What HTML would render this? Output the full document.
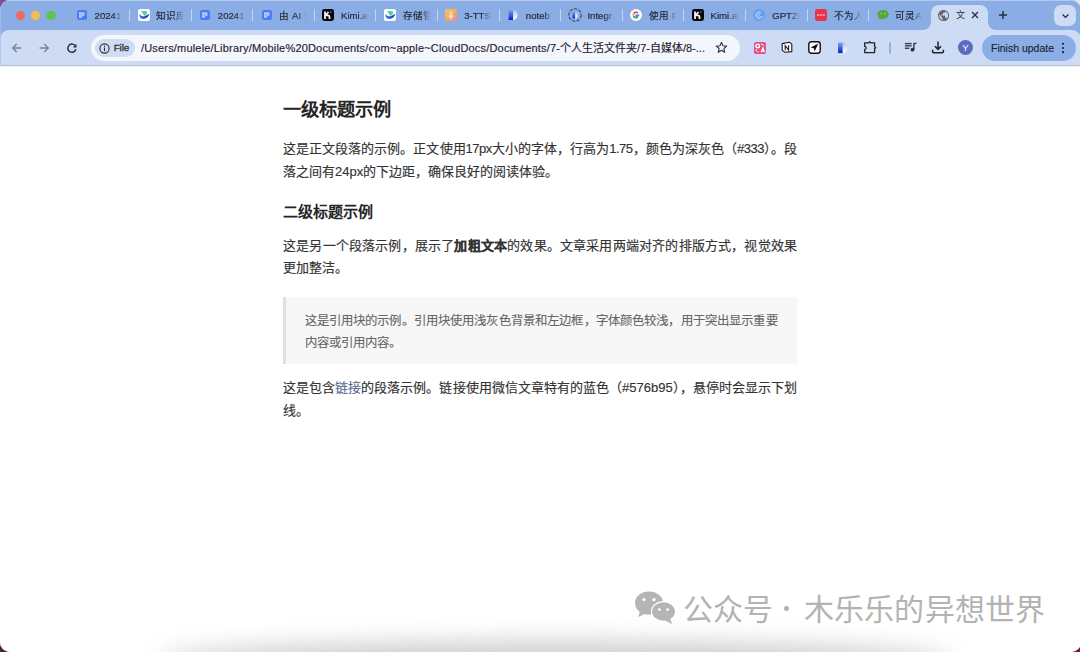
<!DOCTYPE html>
<html lang="zh-CN"><head><meta charset="utf-8">
<style>
*{box-sizing:border-box;margin:0;padding:0}
html,body{width:1080px;height:652px;overflow:hidden}
body{position:relative;background:#b4c8ee;font-family:"Liberation Sans",sans-serif}
.abs{position:absolute}
svg{display:block}
#corner-tl{left:0;top:0;width:14px;height:14px;background:#7a5096}
#corner-tr{right:0;top:0;width:14px;height:14px;background:#e8e4dc}
#corner-bl{left:0;bottom:0;width:14px;height:14px;background:#4a2432}
#corner-br{right:0;bottom:0;width:14px;height:14px;background:#7a1c24}
#win{left:0;top:0;width:1081px;height:652px;border-radius:10px;overflow:hidden;background:#fff;}
#tabstrip{left:0;top:0;width:1086px;height:45px;background:#8badE6}
.tl{width:9.6px;height:9.6px;border-radius:50%;top:10.6px}
#toolbar{left:0;top:30px;width:1081px;height:35px;background:#cddbf4;border-radius:9px 9px 0 0}
#tbborder{left:0;top:65px;width:1086px;height:1px;background:#b9c4d8}
#tbborder2{left:0;top:66px;width:1086px;height:1px;background:#eceff4}
#page{left:0;top:67px;width:1086px;height:600px;background:#fff}
.ti{top:9px;width:12px;height:12px}
.tt{-webkit-text-stroke:.2px #262c38;top:8.6px;width:28px;height:14px;font-size:9.6px;line-height:14px;color:#262c38;white-space:nowrap;overflow:hidden;-webkit-mask-image:linear-gradient(90deg,#000 62%,transparent 100%)}
.sep{width:1px;height:12px;top:9.3px;background:#c3d3f0}
#active{left:931px;top:4.5px;width:56.5px;height:26px;background:#cddbf4;border-radius:8px 8px 0 0}
.flare{width:8px;height:8px;top:21.5px}
#urlbar{left:91px;top:35px;width:649px;height:25.5px;border-radius:13px;background:#f3f6fc}
#chip{left:94.5px;top:38.7px;width:40.2px;height:18.5px;border-radius:9.5px;background:#cfdcf4}
#chiptx{left:113.7px;top:41px;font-size:9.8px;line-height:13px;-webkit-text-stroke:.3px #2a2f38;letter-spacing:-.1px;color:#2a2f38}
#url{-webkit-text-stroke:.15px #1f2329;left:141px;top:40.5px;font-size:11px;line-height:14px;color:#1f2329;white-space:nowrap}
#pill{left:982px;top:34.8px;width:93.8px;height:26px;border-radius:13px;background:#8caee7}
#pilltx{-webkit-text-stroke:.15px #1d2430;left:991px;top:41px;font-size:10.5px;line-height:14px;color:#1d2430;white-space:nowrap}
#ddbtn{left:1054px;top:4.6px;width:21.5px;height:21.2px;border-radius:7px;background:#cddbf4}
#h1{left:283px;font-size:18.2px;line-height:26px;font-weight:bold;color:#242424;white-space:nowrap}
#h2{left:283px;font-size:15px;line-height:22px;font-weight:bold;color:#242424;white-space:nowrap}
.ln{-webkit-text-stroke:.15px #333;left:283px;width:514px;font-size:13px;line-height:23px;height:23px;color:#333;white-space:nowrap;text-align:left}
.j{text-align:justify;text-align-last:justify}
#bq{left:283px;top:297px;width:514px;height:67px;background:#f7f7f7;border-left:3px solid #e0e0e0}
.bql{-webkit-text-stroke:.12px #666;left:304.5px;width:473px;font-size:12.4px;line-height:22px;height:22px;color:#666;white-space:nowrap}
.lt{letter-spacing:-.5px}
.lk{color:#576b95;-webkit-text-stroke:.15px #576b95}
.wm{top:591.5px;font-size:30px;line-height:36px;color:#b3b3b3;white-space:nowrap}
#shadow{left:160px;top:642px;width:790px;height:36px;border-radius:50%;background:#9a9a9a;filter:blur(12px);opacity:.5}
</style></head><body>
<div class="abs" id="corner-tl"></div>
<div class="abs" id="corner-tr"></div>
<div class="abs" id="corner-bl"></div>
<div class="abs" id="corner-br"></div>
<div class="abs" id="win">
  <div class="abs" id="tabstrip"></div>
  <div class="abs" style="left:6px;top:0;width:1068px;height:1px;background:#b4c8ee"></div>
  <div class="abs tl" style="left:15.7px;background:#ed6a5e"></div>
  <div class="abs tl" style="left:30.9px;background:#f4bd4f"></div>
  <div class="abs tl" style="left:46.2px;background:#61c554"></div>
  <div class="abs ti" style="left:76.0px"><svg width="12" height="12" viewBox="0 0 12 12"><rect x="1" y="1" width="10" height="10" rx="2" fill="#4b7cf6"/><rect x="3" y="3.6" width="5.5" height="1" fill="#fff"/><rect x="3" y="5.5" width="5.5" height="1" fill="#fff"/><rect x="3" y="7.4" width="3.2" height="1" fill="#fff"/></svg></div>
  <div class="abs tt" style="left:94.6px">20241</div>
  <div class="abs sep" style="left:128.9px"></div>
  <div class="abs ti" style="left:137.6px"><svg width="12" height="12" viewBox="0 0 12 12"><rect x="0" y="0" width="12" height="12" rx="2" fill="#fff"/><path d="M3.2 1.9 H8.4 L9.4 4.6 L6.2 7 Z" fill="#52cfae"/><path d="M1.3 5.2 C2.8 6.6 4.4 7.4 6 7.2 C8 6.9 9.6 5.4 11.3 4.7 C10.6 7.6 8.4 9.9 5.2 9.9 C2.6 9.9 1.3 8 1.3 5.2 Z" fill="url(#gz)"/><defs><linearGradient id="gz" x1="0" y1="0" x2="1" y2="0"><stop offset="0" stop-color="#3e6ef7"/><stop offset=".5" stop-color="#3458e0"/><stop offset="1" stop-color="#16299a"/></linearGradient></defs></svg></div>
  <div class="abs tt" style="left:156.2px">知识库</div>
  <div class="abs sep" style="left:190.5px"></div>
  <div class="abs ti" style="left:199.2px"><svg width="12" height="12" viewBox="0 0 12 12"><rect x="1" y="1" width="10" height="10" rx="2" fill="#4b7cf6"/><rect x="3" y="3.6" width="5.5" height="1" fill="#fff"/><rect x="3" y="5.5" width="5.5" height="1" fill="#fff"/><rect x="3" y="7.4" width="3.2" height="1" fill="#fff"/></svg></div>
  <div class="abs tt" style="left:217.8px">20241</div>
  <div class="abs sep" style="left:252.1px"></div>
  <div class="abs ti" style="left:260.8px"><svg width="12" height="12" viewBox="0 0 12 12"><rect x="1" y="1" width="10" height="10" rx="2" fill="#4b7cf6"/><rect x="3" y="3.6" width="5.5" height="1" fill="#fff"/><rect x="3" y="5.5" width="5.5" height="1" fill="#fff"/><rect x="3" y="7.4" width="3.2" height="1" fill="#fff"/></svg></div>
  <div class="abs tt" style="left:279.4px">由 AI 生</div>
  <div class="abs sep" style="left:313.7px"></div>
  <div class="abs ti" style="left:322.4px"><svg width="12" height="12" viewBox="0 0 12 12"><rect x="0" y="0" width="12" height="12" rx="2.4" fill="#050505"/><path d="M3 2.4 V10 M3 6.4 H5.9 C7 6.4 7.5 7 7.5 8 V10 M3.6 6.2 C4.6 5.4 5.6 4.2 6.4 2.9" stroke="#f2f2f2" stroke-width="1.8" fill="none"/><circle cx="8.8" cy="2.9" r="1" fill="#2d63d2"/></svg></div>
  <div class="abs tt" style="left:341.0px">Kimi.ai</div>
  <div class="abs sep" style="left:375.3px"></div>
  <div class="abs ti" style="left:384.0px"><svg width="12" height="12" viewBox="0 0 12 12"><rect x="0" y="0" width="12" height="12" rx="2" fill="#fff"/><path d="M3.2 1.9 H8.4 L9.4 4.6 L6.2 7 Z" fill="#52cfae"/><path d="M1.3 5.2 C2.8 6.6 4.4 7.4 6 7.2 C8 6.9 9.6 5.4 11.3 4.7 C10.6 7.6 8.4 9.9 5.2 9.9 C2.6 9.9 1.3 8 1.3 5.2 Z" fill="url(#gz)"/><defs><linearGradient id="gz" x1="0" y1="0" x2="1" y2="0"><stop offset="0" stop-color="#3e6ef7"/><stop offset=".5" stop-color="#3458e0"/><stop offset="1" stop-color="#16299a"/></linearGradient></defs></svg></div>
  <div class="abs tt" style="left:402.6px">存储管</div>
  <div class="abs sep" style="left:436.9px"></div>
  <div class="abs ti" style="left:445.1px"><svg width="12" height="12" viewBox="0 0 12 12"><defs><linearGradient id="gm" x1="0" y1="0" x2="1" y2="1"><stop offset="0" stop-color="#f6c662"/><stop offset=".6" stop-color="#f0a562"/><stop offset="1" stop-color="#ee8a9e"/></linearGradient></defs><rect x="0" y="0" width="12" height="12" rx="2.4" fill="url(#gm)"/><path d="M6 2.2 C6.9 2.2 7.3 2.9 7.3 3.8 V6 L8.3 7 V8 L7 8.6 V9.8 H5 V8.6 L3.7 8 V7 L4.7 6 V3.8 C4.7 2.9 5.1 2.2 6 2.2Z" fill="#f8e4d0"/><rect x="5.6" y="3.4" width=".8" height="2.8" rx=".4" fill="#eba868"/></svg></div>
  <div class="abs tt" style="left:464.2px">3-TTS</div>
  <div class="abs sep" style="left:498.5px"></div>
  <div class="abs ti" style="left:507.2px"><svg width="12" height="12" viewBox="0 0 12 12"><defs><linearGradient id="gn1" x1="0" y1="0" x2="0" y2="1"><stop offset="0" stop-color="#86a2ee"/><stop offset="1" stop-color="#0a20c2"/></linearGradient><linearGradient id="gn2" x1="0" y1="0" x2="0" y2="1"><stop offset="0" stop-color="#a4bbf3"/><stop offset=".55" stop-color="#dfe7fb"/><stop offset="1" stop-color="#fafbff"/></linearGradient></defs><path d="M6 .8 A4.6 5.1 0 0 1 6 11 Z" fill="url(#gn2)"/><rect x="1.6" y=".8" width="4.5" height="10.2" fill="url(#gn1)"/></svg></div>
  <div class="abs tt" style="left:525.8px">noteb</div>
  <div class="abs sep" style="left:560.1px"></div>
  <div class="abs ti" style="left:568.8px"><svg width="14" height="14" viewBox="0 0 14 14" style="margin:-1px 0 0 -1px"><defs><linearGradient id="gi1" x1="0" y1="0" x2="0" y2="1"><stop offset="0" stop-color="#86a2ee"/><stop offset="1" stop-color="#0a20c2"/></linearGradient><linearGradient id="gi2" x1="0" y1="0" x2="0" y2="1"><stop offset="0" stop-color="#a4bbf3"/><stop offset="1" stop-color="#fafbff"/></linearGradient></defs><circle cx="7" cy="7" r="6.2" fill="none" stroke="#3b4254" stroke-width="1.1" stroke-dasharray="3.2 1.4"/><path d="M7 3.6 A2.9 3.4 0 0 1 7 10.4 Z" fill="url(#gi2)"/><rect x="4.6" y="3.6" width="2.5" height="6.8" fill="url(#gi1)"/></svg></div>
  <div class="abs tt" style="left:587.4px">Integr</div>
  <div class="abs sep" style="left:621.7px"></div>
  <div class="abs ti" style="left:630.4px"><svg width="12" height="12" viewBox="0 0 12 12"><circle cx="6" cy="6" r="6" fill="#fff"/><path d="M9.3 6.2 H6.1 V7.4 H8 C7.7 8.3 7 8.7 6.1 8.7 A2.7 2.7 0 1 1 7.9 4" fill="none" stroke="#4285f4" stroke-width="1.3"/><path d="M3.7 4.5 A2.7 2.7 0 0 1 7.9 4" fill="none" stroke="#ea4335" stroke-width="1.3"/><path d="M3.5 7.2 A2.7 2.7 0 0 1 3.7 4.5" fill="none" stroke="#fbbc05" stroke-width="1.3"/><path d="M3.5 7.2 A2.7 2.7 0 0 0 7.4 8.4" fill="none" stroke="#34a853" stroke-width="1.3"/></svg></div>
  <div class="abs tt" style="left:649.0px">使用 P</div>
  <div class="abs sep" style="left:683.3px"></div>
  <div class="abs ti" style="left:692.0px"><svg width="12" height="12" viewBox="0 0 12 12"><rect x="0" y="0" width="12" height="12" rx="2.4" fill="#050505"/><path d="M3 2.4 V10 M3 6.4 H5.9 C7 6.4 7.5 7 7.5 8 V10 M3.6 6.2 C4.6 5.4 5.6 4.2 6.4 2.9" stroke="#f2f2f2" stroke-width="1.8" fill="none"/><circle cx="8.8" cy="2.9" r="1" fill="#2d63d2"/></svg></div>
  <div class="abs tt" style="left:710.6px">Kimi.ai</div>
  <div class="abs sep" style="left:744.9px"></div>
  <div class="abs ti" style="left:753.6px"><svg width="12" height="12" viewBox="0 0 12 12" style="margin-left:-.6px"><circle cx="6" cy="6" r="5.9" fill="#5e9ef3"/><path d="M8.4 3.6 A3.5 3.5 0 1 0 9.3 7.6" fill="none" stroke="#c6dcfb" stroke-width=".8"/><path d="M7.4 4.6 A2.1 2.1 0 1 0 7.9 7" fill="none" stroke="#c6dcfb" stroke-width=".8"/><circle cx="6" cy="6" r=".7" fill="#d8e8fc"/><path d="M8.6 7.4 L9.8 8.2" stroke="#c6dcfb" stroke-width=".8"/></svg></div>
  <div class="abs tt" style="left:772.2px">GPTZe</div>
  <div class="abs sep" style="left:806.5px"></div>
  <div class="abs ti" style="left:815.2px"><svg width="12" height="12" viewBox="0 0 12 12"><rect x="0" y="0" width="12" height="12" rx="2.4" fill="#e8344a"/><rect x="2.2" y="5.4" width="1.9" height="1.3" fill="#fff" opacity=".8"/><rect x="5" y="5.4" width="1.9" height="1.3" fill="#fff" opacity=".8"/><rect x="7.8" y="5.4" width="1.9" height="1.3" fill="#fff" opacity=".8"/></svg></div>
  <div class="abs tt" style="left:833.8px">不为人</div>
  <div class="abs sep" style="left:868.1px"></div>
  <div class="abs ti" style="left:876.8px"><svg width="12" height="12" viewBox="0 0 12 12"><ellipse cx="6" cy="5.6" rx="5.7" ry="4.6" fill="#56a83a"/><path d="M2.6 8.6 L2.2 11 L5 9.6Z" fill="#56a83a"/><circle cx="4.2" cy="4.6" r=".6" fill="#fff" opacity=".7"/><circle cx="7.8" cy="4.6" r=".6" fill="#fff" opacity=".7"/></svg></div>
  <div class="abs tt" style="left:895.4px">可灵A</div>
  <div class="abs" id="active"></div>
  <svg class="abs flare" style="left:923px" viewBox="0 0 8 8"><path d="M0 8 A8 8 0 0 0 8 0 V8Z" fill="#cddbf4"/></svg>
  <svg class="abs flare" style="left:987.5px" viewBox="0 0 8 8"><path d="M8 8 A8 8 0 0 1 0 0 V8Z" fill="#cddbf4"/></svg>
  <svg class="abs" style="left:937.6px;top:9.6px" width="11.2" height="11.2" viewBox="2 2 20 20"><path fill="#64686e" d="M12 2C6.48 2 2 6.48 2 12s4.48 10 10 10 10-4.48 10-10S17.52 2 12 2zm-1 17.93c-3.95-.49-7-3.85-7-7.93 0-.62.08-1.21.21-1.79L9 15v1c0 1.1.9 2 2 2v1.93zm6.9-2.54c-.26-.81-1-1.39-1.9-1.39h-1v-3c0-.55-.45-1-1-1H8v-2h2c.55 0 1-.45 1-1V7h2c1.1 0 2-.9 2-2v-.41c2.93 1.19 5 4.06 5 7.41 0 2.08-.8 3.97-2.1 5.39z"/></svg>
  <div class="abs" style="left:955.5px;top:9px;font-size:9px;line-height:13px;color:#2a2f38">文</div>
  <svg class="abs" style="left:971px;top:11.2px" width="8" height="8" viewBox="0 0 8 8"><path d="M1 1 L7 7 M7 1 L1 7" stroke="#2a2f38" stroke-width="1.3"/></svg>
  <svg class="abs" style="left:997.5px;top:10.3px" width="10" height="10" viewBox="0 0 10 10"><path d="M5 1 V9 M1 5 H9" stroke="#2a2f38" stroke-width="1.5"/></svg>
  <div class="abs" id="ddbtn"></div>
  <svg class="abs" style="left:1060.5px;top:11.5px" width="9" height="8" viewBox="0 0 9 8"><path d="M1.6 2.6 L4.5 5.4 L7.4 2.6" stroke="#2a2f38" stroke-width="1.4" fill="none"/></svg>

  <div class="abs" id="toolbar"></div>
  <div class="abs" id="tbborder"></div>
  <div class="abs" id="tbborder2"></div>
  <div class="abs" id="page"></div>
  <div class="abs" style="left:0;top:6px;width:1px;height:59px;background:#a6bdea;opacity:.7"></div>
  <svg class="abs" style="left:10px;top:41px" width="14" height="14" viewBox="0 0 14 14"><path d="M11.4 7 H2.8 M6.7 3 L2.7 7 L6.7 11" stroke="#7b818c" stroke-width="1.35" fill="none"/></svg>
  <svg class="abs" style="left:37px;top:41px" width="14" height="14" viewBox="0 0 14 14"><path d="M2.6 7 H11.2 M7.3 3 L11.3 7 L7.3 11" stroke="#7b818c" stroke-width="1.35" fill="none"/></svg>
  <svg class="abs" style="left:64.5px;top:40.5px" width="14" height="14" viewBox="0 0 14 14"><path d="M10.6 5.3 A4.1 4.1 0 1 0 10.9 8.3" stroke="#2b2f36" stroke-width="1.45" fill="none"/><path d="M11.5 2.9 V6.5 H7.9Z" fill="#2b2f36"/></svg>
  <div class="abs" id="urlbar"></div>
  <div class="abs" id="chip"></div>
  <svg class="abs" style="left:98.6px;top:42.5px" width="11" height="11" viewBox="0 0 11 11"><circle cx="5.5" cy="5.5" r="4.6" stroke="#2b2f36" stroke-width="1.1" fill="none"/><rect x="4.95" y="4.6" width="1.1" height="3.6" fill="#2b2f36"/><circle cx="5.5" cy="3.2" r=".7" fill="#2b2f36"/></svg>
  <div class="abs" id="chiptx">File</div>
  <div class="abs" id="url"><span style="letter-spacing:.18px">/Users/mulele/Library/Mobile%20Documents/com~apple~CloudDocs/Documents/7-</span>个人生活文件夹/7-自媒体/8-...</div>
  <svg class="abs" style="left:715px;top:40.9px" width="13" height="13" viewBox="0 0 13 13"><path d="M6.5 1.4 L8 4.8 L11.7 5.1 L8.9 7.5 L9.7 11.2 L6.5 9.3 L3.3 11.2 L4.1 7.5 L1.3 5.1 L5 4.8Z" stroke="#2b2f36" stroke-width="1.1" fill="none" stroke-linejoin="round"/></svg>
  <svg class="abs" style="left:754px;top:41.8px" width="12" height="12" viewBox="0 0 12 12"><rect width="12" height="12" rx="1.8" fill="#e05287"/><circle cx="3.7" cy="3.9" r="1.8" stroke="#fff" stroke-width="1.4" fill="none"/><path d="M7.3 10.3 L8.9 5.9 L10.5 10.3 M7.9 8.9 H9.9" stroke="#fff" stroke-width="1.2" fill="none"/><path d="M7 2.1 C8.6 2.1 9.6 2.8 9.9 4.2 M2.1 7.3 C2.1 8.9 2.8 9.9 4.4 10" stroke="#fff" stroke-width="1" fill="none"/></svg>
  <svg class="abs" style="left:781px;top:41.4px" width="12" height="12" viewBox="0 0 12 12"><path d="M1.2 2.6 L8.4 1.2 L10.8 3.2 V10.6 L3.6 11.2 L1.2 9.2Z" fill="#fff" stroke="#1b1b1b" stroke-width="1.1" stroke-linejoin="round"/><path d="M4.2 9.2 V4.6 L7.6 9.2 V4.2" stroke="#1b1b1b" stroke-width="1.1" fill="none"/></svg>
  <svg class="abs" style="left:808px;top:40.8px" width="13" height="13" viewBox="0 0 13 13"><rect x=".8" y=".8" width="11.4" height="11.4" rx="2.4" fill="#fff" stroke="#111" stroke-width="1.4"/><path d="M2.6 6.4 L10.4 2.6 L6.6 10.4 L5.8 7.2 Z" fill="#111"/></svg>
  <svg class="abs" style="left:836.5px;top:42px" width="11" height="12" viewBox="0 0 11 12"><defs><linearGradient id="gb1" x1="0" y1="0" x2="0" y2="1"><stop offset="0" stop-color="#86a2ee"/><stop offset="1" stop-color="#0a20c2"/></linearGradient><linearGradient id="gb2" x1="0" y1="0" x2="0" y2="1"><stop offset="0" stop-color="#a4bbf3"/><stop offset=".55" stop-color="#dfe7fb"/><stop offset="1" stop-color="#fafbff"/></linearGradient></defs><path d="M5.5 .5 A4.9 5.3 0 0 1 5.5 11.1 Z" fill="url(#gb2)"/><rect x="1" y=".5" width="4.6" height="10.6" fill="url(#gb1)"/></svg>
  <svg class="abs" style="left:863px;top:41px" width="14" height="13" viewBox="0 0 14 13"><path d="M1.7 1.9 H5.6 L6.6 .8 L7.6 1.9 H11.6 V5.8 L12.7 6.8 L11.6 7.8 V11.6 H1.7 V8.4 C2.7 8.4 3.1 7.7 3.1 6.9 C3.1 6.1 2.7 5.4 1.7 5.4 Z" stroke="#1f2329" stroke-width="1.3" fill="none" stroke-linejoin="round"/></svg>
  <div class="abs" style="left:889px;top:42px;width:2px;height:12px;background:#90b0e8;border-radius:1px"></div>
  <svg class="abs" style="left:904px;top:42px" width="13" height="11" viewBox="0 0 13 11"><rect x=".9" y=".9" width="6.8" height="1.4" fill="#3d424a"/><rect x=".9" y="3.1" width="6.8" height="1.4" fill="#3d424a"/><rect x=".9" y="5.6" width="4.4" height="1.3" fill="#2b2f36"/><path d="M9.9 7.6 V1.7 L12.4 1.2" stroke="#2b2f36" stroke-width="1.3" fill="none"/><circle cx="8.5" cy="7.7" r="1.9" fill="#2b2f36"/></svg>
  <svg class="abs" style="left:931px;top:41.2px" width="14" height="13" viewBox="0 0 14 13"><path d="M7 .4 V8.4 M3.9 5.3 L7 8.4 L10.1 5.3" stroke="#1f2329" stroke-width="1.5" fill="none"/><path d="M1.6 8.8 V10.6 Q1.6 11.7 2.7 11.7 H11.3 Q12.4 11.7 12.4 10.6 V8.8" stroke="#1f2329" stroke-width="1.5" fill="none"/></svg>
  <div class="abs" style="left:957.8px;top:40.2px;width:15px;height:15px;border-radius:50%;background:#5c6bc0;color:#fff;font-size:9.5px;line-height:15px;text-align:center">Y</div>
  <div class="abs" id="pill"></div>
  <div class="abs" id="pilltx">Finish update</div>
  <svg class="abs" style="left:1061px;top:42px" width="4" height="12" viewBox="0 0 4 12"><circle cx="2" cy="1.8" r="1.1" fill="#1d2430"/><circle cx="2" cy="6" r="1.1" fill="#1d2430"/><circle cx="2" cy="10.2" r="1.1" fill="#1d2430"/></svg>

  <div class="abs" id="h1" style="top:96.8px">一级标题示例</div>
  <div class="abs ln j" style="top:136.5px">这是正文段落的示例。正文使用<span class="lt">17px</span>大小的字体，行高为<span class="lt">1.75</span>，颜色为深灰色（<span class="lt">#333</span>）。段</div>
  <div class="abs ln" style="top:159.5px">落之间有24px的下边距，确保良好的阅读体验。</div>
  <div class="abs" id="h2" style="top:200.5px">二级标题示例</div>
  <div class="abs ln j" style="top:233.5px">这是另一个段落示例，展示了<b>加粗文本</b>的效果。文章采用两端对齐的排版方式，视觉效果</div>
  <div class="abs ln" style="top:256px">更加整洁。</div>
  <div class="abs" id="bq"></div>
  <div class="abs bql j" style="top:310px">这是引用块的示例。引用块使用浅灰色背景和左边框，字体颜色较浅，用于突出显示重要</div>
  <div class="abs bql" style="top:332px">内容或引用内容。</div>
  <div class="abs ln j" style="top:376px">这是包含<span class="lk">链接</span>的段落示例。链接使用微信文章特有的蓝色（#576b95），悬停时会显示下划</div>
  <div class="abs ln" style="top:399px">线。</div>

  <div class="abs" id="shadow"></div>
  <svg class="abs" style="left:634px;top:590px" width="43" height="35" viewBox="0 0 43 35"><ellipse cx="15" cy="13" rx="14" ry="11.6" fill="#b5b5b5"/><path d="M6 20 L4.5 27 L12 23Z" fill="#b5b5b5"/><circle cx="10" cy="9.6" r="1.7" fill="#fff"/><circle cx="20" cy="9.6" r="1.7" fill="#fff"/><ellipse cx="29.5" cy="21.5" rx="12.6" ry="10.4" fill="#fff"/><ellipse cx="29.5" cy="21.5" rx="11.4" ry="9.3" fill="#b5b5b5"/><path d="M36 28 L38 34 L31 30.4Z" fill="#b5b5b5"/><circle cx="25.4" cy="19.6" r="1.4" fill="#fff"/><circle cx="33.6" cy="19.6" r="1.4" fill="#fff"/></svg>
  <div class="abs wm" style="left:682.5px">公众号</div>
  <div class="abs" style="left:784.2px;top:606px;width:4.7px;height:4.7px;border-radius:50%;background:#b3b3b3"></div>
  <div class="abs wm" style="left:803.5px;letter-spacing:.25px">木乐乐的异想世界</div>
</div>
</body></html>
